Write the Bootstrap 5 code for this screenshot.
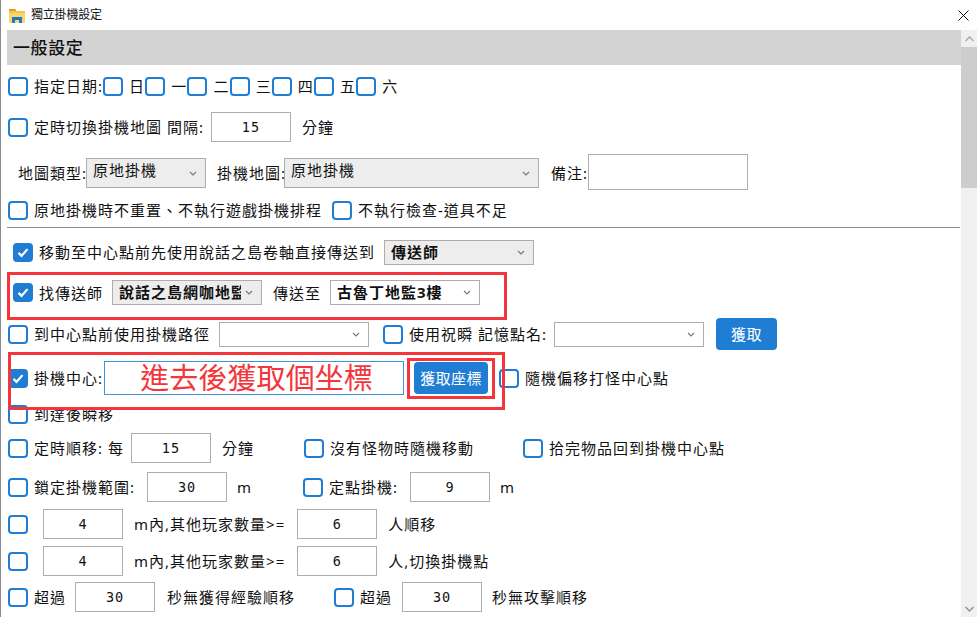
<!DOCTYPE html>
<html lang="zh-Hant">
<head>
<meta charset="utf-8">
<title>獨立掛機設定</title>
<link href="https://cdn.jsdelivr.net/npm/bootstrap@5.3.0/dist/css/bootstrap.min.css" rel="stylesheet">
<style>
html,body{height:617px;overflow:hidden;background:#fff}
body{font-family:"Noto Sans","Noto Sans CJK TC",sans-serif;font-size:15px;letter-spacing:1px;color:#111;line-height:20px}
.shell{position:relative;width:977px;height:617px;border-left:1px solid #8c8c8c}
.titlebar{height:30px;padding-left:8px;font-size:12px;letter-spacing:-.2px}
.titlebar svg{margin-right:6px}
.titlebar svg.closer{margin-left:auto;margin-right:8px}
.pane{height:587px}
.formarea{width:954px;margin-left:6px;overflow:hidden}
.rail{width:16px;background:#f0f0f0}
.rail-arrow{height:17px}
.rail-thumb{height:141px;background:#cdcdcd}
.band{height:35px;background:#d3d3d3;padding-left:6px;font-size:17px;font-weight:500;letter-spacing:.6px}
.rw{display:flex;align-items:center;white-space:nowrap}
.h22{height:22px}.h32{height:32px}.h36{height:36px}.h38{height:38px}.h40{height:40px}.h42{height:42px}.h45{height:45px}.h46{height:46px}.h50{height:50px}.h52{height:52px}
.rule{height:13px;padding-top:6px}
.rule div{height:1px;background:#8c8c8c;width:953px}
.form-check-input.box{width:20px;height:19px;margin:0 6px 0 1px;flex:none;border:2px solid #1f7dd3;border-radius:4px;background-color:#fff;box-shadow:none}
.form-check-input.box:checked{background-color:#1f7dd3;border-color:#1f7dd3;background-size:100% 100%;background-image:url("data:image/svg+xml,%3Csvg xmlns='http://www.w3.org/2000/svg' viewBox='0 0 20 20'%3E%3Cpath d='M4 10.500l4 4 8-9' fill='none' stroke='%23fff' stroke-width='3'/%3E%3C/svg%3E")}
.num.form-control{width:80px;height:30px;padding:0;flex:none;border:1px solid #adadad;border-radius:0;text-align:center;font-family:"DejaVu Sans Mono",monospace;font-size:13.5px;letter-spacing:1px;color:#111;box-shadow:none}
.note.form-control{width:160px;height:36px;flex:none;border:1px solid #adadad;border-radius:0;box-shadow:none;margin-top:-2px}
.pick.form-select{height:25px;width:150px;flex:none;padding:0 20px 3px 6px;border:1px solid #adadad;border-radius:0;font-size:15px;letter-spacing:1px;color:#111;background-image:url("data:image/svg+xml,%3Csvg xmlns='http://www.w3.org/2000/svg' viewBox='0 0 8 5'%3E%3Cpath d='M1 1l3 3 3-3' fill='none' stroke='%23777' stroke-width='1.100'/%3E%3C/svg%3E");background-size:8px 5px;background-position:right 8px center;background-color:#fff;box-shadow:none}
.pick.grey{background-color:#ededed}
.pick.strong{font-weight:700}
.pick.w120{width:120px;height:30px;padding-bottom:6px}
.pick.w255{width:255px;height:30px;padding-bottom:6px}
.fetch.btn{width:61px;height:32px;padding:0;background:#1f7dd3;border:0;border-radius:4px;color:#fff;font-size:15px;letter-spacing:.4px}
.fetch.big{width:74px;height:32px}
.coord.form-control{width:300px;height:34px;padding:0 0 5px 5px;flex:none;border:1px solid #3f93dc;border-radius:0;text-align:center;color:#f4363c;font-size:29px;letter-spacing:.1px;line-height:30px;box-shadow:none}
.mark-box{position:absolute;border:3px solid #f4363c;pointer-events:none}
.mb1{left:6px;top:272px;width:500px;height:48px}
.mb2{left:7px;top:352px;width:497px;height:58px}
.mb3{left:406px;top:358px;width:88px;height:41px}
.rw .lm2{margin-left:-2px}.rw .lm1{margin-left:-1px}.rw .l0{margin-left:0}.rw .l1{margin-left:1px}.rw .ld{margin-left:.2px}
.rw .l6{margin-left:6px}.rw .l7{margin-left:7px}.rw .l9{margin-left:9px}.rw .l10{margin-left:10px}.rw .l11{margin-left:11px}.rw .l12{margin-left:12px}.rw .l14{margin-left:14px}
.rw .l39{margin-left:39px}.rw .l49{margin-left:49px}.rw .l50{margin-left:50px}.rw .l51{margin-left:51px}
.ind{padding-left:5px}
.ind11{padding-left:11px}
</style>
</head>
<body>
<div class="shell">
  <div class="titlebar d-flex align-items-center">
    <svg width="16" height="15" viewBox="0 0 16 15"><path d="M0 1h6l1.500 2H16v11.500H0z" fill="#f5c44a"/><path d="M0 1h6l1.500 2H0z" fill="#e09c1e"/><path d="M0 5h16v9.500H0z" fill="#fbd56b"/><path d="M3 15V9h10v6h-3v-3H6v3z" fill="#1b78c9"/></svg>
    <span>獨立掛機設定</span>
    <svg class="closer" width="11" height="11" viewBox="0 0 11 11"><path d="M.5.500l10 10M10.500.500l-10 10" stroke="#111" stroke-width="1" fill="none"/></svg>
  </div>
  <div class="pane d-flex">
    <div class="formarea">
      <div class="band d-flex align-items-center">一般設定</div>

      <div class="rw h42">
        <input class="form-check-input box" type="checkbox"><span>指定日期:</span>
        <input class="form-check-input box l0" type="checkbox"><span>日</span>
        <input class="form-check-input box ld" type="checkbox"><span>一</span>
        <input class="form-check-input box ld" type="checkbox"><span>二</span>
        <input class="form-check-input box ld" type="checkbox"><span>三</span>
        <input class="form-check-input box ld" type="checkbox"><span>四</span>
        <input class="form-check-input box ld" type="checkbox"><span>五</span>
        <input class="form-check-input box ld" type="checkbox"><span>六</span>
      </div>

      <div class="rw h40">
        <input class="form-check-input box" type="checkbox"><span>定時切換掛機地圖 間隔:</span>
        <input class="num form-control l7" type="text" value="15"><span class="l11">分鐘</span>
      </div>

      <div class="rw h52 ind11">
        <span>地圖類型:</span>
        <select class="pick w120 grey form-select lm1"><option>原地掛機</option></select>
        <span class="l11">掛機地圖:</span>
        <select class="pick w255 grey form-select lm2"><option>原地掛機</option></select>
        <span class="l12">備注:</span>
        <input class="note form-control l0" type="text">
      </div>

      <div class="rw h22">
        <input class="form-check-input box" type="checkbox"><span>原地掛機時不重置、不執行遊戲掛機排程</span>
        <input class="form-check-input box l10" type="checkbox"><span>不執行檢查-道具不足</span>
      </div>

      <div class="rule"><div></div></div>

      <div class="rw h36 ind">
        <input class="form-check-input box" type="checkbox" checked><span>移動至中心點前先使用說話之島卷軸直接傳送到</span>
        <select class="pick grey strong form-select l9"><option>傳送師</option></select>
      </div>

      <div class="rw h45 ind">
        <input class="form-check-input box" type="checkbox" checked><span>找傳送師</span>
        <select class="pick grey strong form-select l9"><option>說話之島網咖地監</option></select>
        <span class="l11">傳送至</span>
        <select class="pick strong form-select l9"><option>古魯丁地監3樓</option></select>
      </div>

      <div class="rw h38">
        <input class="form-check-input box" type="checkbox"><span>到中心點前使用掛機路徑</span>
        <select class="pick form-select l9"><option></option></select>
        <input class="form-check-input box l14" type="checkbox"><span>使用祝瞬 記憶點名:</span>
        <select class="pick form-select l7"><option></option></select>
        <button class="fetch btn l12" type="button">獲取</button>
      </div>

      <div class="rw h50">
        <input class="form-check-input box" type="checkbox" checked><span>掛機中心:</span>
        <input class="coord form-control l1" type="text" value="進去後獲取個坐標">
        <button class="fetch big btn l10" type="button">獲取座標</button>
        <input class="form-check-input box l11" type="checkbox"><span>隨機偏移打怪中心點</span>
      </div>

      <div class="rw h22">
        <input class="form-check-input box" type="checkbox"><span>到達後瞬移</span>
      </div>

      <div class="rw h46">
        <input class="form-check-input box" type="checkbox"><span>定時順移: 每</span>
        <input class="num form-control l7" type="text" value="15"><span class="l11">分鐘</span>
        <input class="form-check-input box l50" type="checkbox"><span>沒有怪物時隨機移動</span>
        <input class="form-check-input box l49" type="checkbox"><span>拾完物品回到掛機中心點</span>
      </div>

      <div class="rw h32">
        <input class="form-check-input box" type="checkbox"><span>鎖定掛機範圍:</span>
        <input class="num form-control l12" type="text" value="30"><span class="l10">m</span>
        <input class="form-check-input box l51" type="checkbox"><span>定點掛機:</span>
        <input class="num form-control l12" type="text" value="9"><span class="l10">m</span>
      </div>

      <div class="rw h42">
        <input class="form-check-input box" type="checkbox">
        <input class="num form-control l9" type="text" value="4"><span class="l11">m內,其他玩家數量&gt;=</span>
        <input class="num form-control l12" type="text" value="6"><span class="l11">人順移</span>
      </div>

      <div class="rw h32">
        <input class="form-check-input box" type="checkbox">
        <input class="num form-control l9" type="text" value="4"><span class="l11">m內,其他玩家數量&gt;=</span>
        <input class="num form-control l12" type="text" value="6"><span class="l11">人,切換掛機點</span>
      </div>

      <div class="rw h40">
        <input class="form-check-input box" type="checkbox"><span>超過</span>
        <input class="num form-control l9" type="text" value="30"><span class="l12">秒無獲得經驗順移</span>
        <input class="form-check-input box l39" type="checkbox"><span>超過</span>
        <input class="num form-control l10" type="text" value="30"><span class="l10">秒無攻擊順移</span>
      </div>
    </div>

    <div class="rail d-flex flex-column ms-auto">
      <div class="rail-arrow d-flex align-items-center justify-content-center">
        <svg width="9" height="6" viewBox="0 0 9 6"><path d="M.5 5l4-4 4 4" stroke="#a6a6a6" stroke-width="1.300" fill="none"/></svg>
      </div>
      <div class="rail-thumb"></div>
      <div class="rail-arrow d-flex align-items-center justify-content-center mt-auto">
        <svg width="9" height="6" viewBox="0 0 9 6"><path d="M.5 1l4 4 4-4" stroke="#8f8f8f" stroke-width="1.300" fill="none"/></svg>
      </div>
    </div>
  </div>

  <div class="mark-box mb1"></div>
  <div class="mark-box mb2"></div>
  <div class="mark-box mb3"></div>
</div>
<script src="https://cdn.jsdelivr.net/npm/bootstrap@5.3.0/dist/js/bootstrap.bundle.min.js"></script>
</body>
</html>
